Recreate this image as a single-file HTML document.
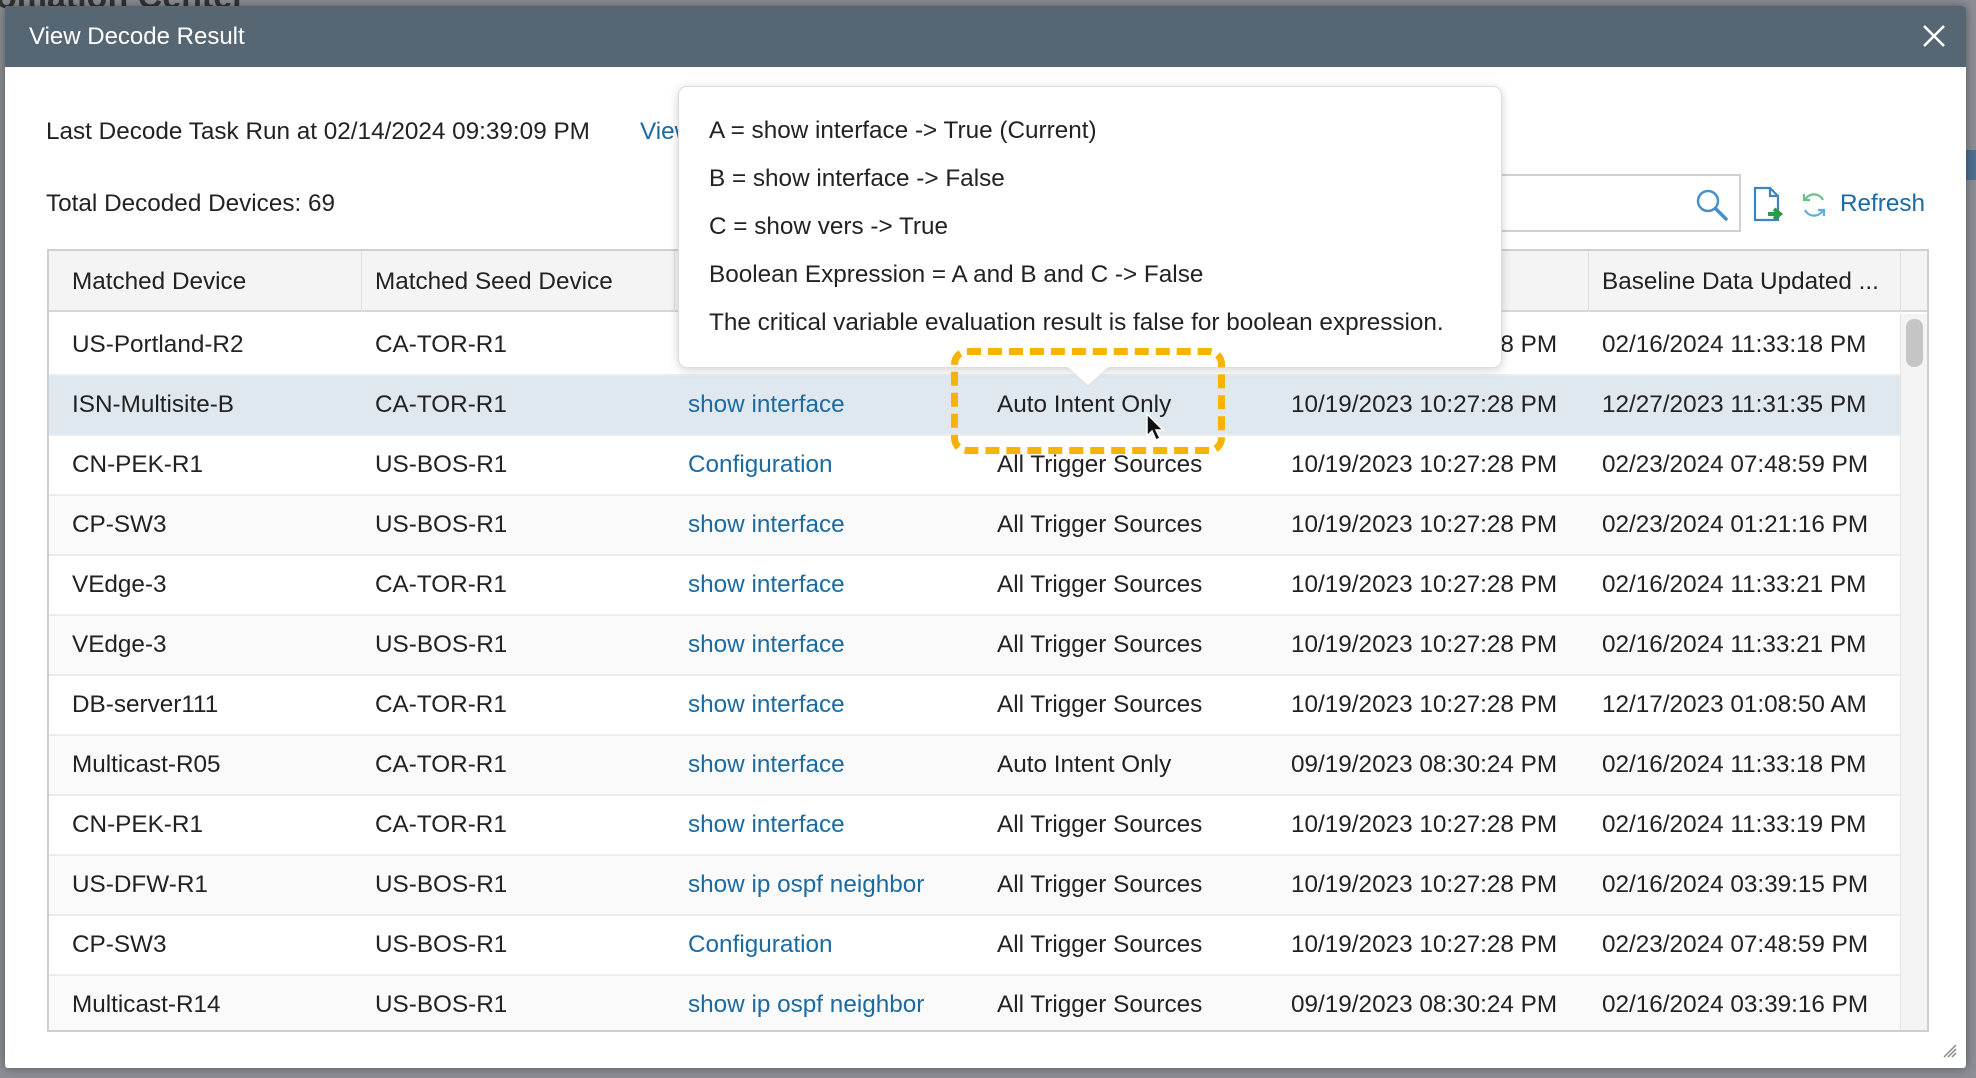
<!DOCTYPE html>
<html><head><meta charset="utf-8">
<style>
*{margin:0;padding:0;box-sizing:border-box}
html,body{width:1976px;height:1078px;overflow:hidden}
body{background:#8b8f95;font-family:"Liberation Sans",sans-serif;color:#222;position:relative}
.bgt{position:absolute;left:-4px;top:-22px;font-size:34px;font-weight:bold;color:#333}
.dlg{position:absolute;left:5px;top:6px;width:1961px;height:1062px;background:#fff;box-shadow:0 0 10px rgba(0,0,0,.4);border-radius:3px;overflow:hidden}
.tb{position:absolute;left:0;top:0;right:0;height:61px;background:#566773;color:#fff;font-size:24px;line-height:61px;padding-left:24px}
.x{position:absolute;right:20px;top:18px}
.abs{position:absolute;white-space:nowrap}
.t{font-size:24.3px}
.lk{color:#1b6aa1}
.tbl{position:absolute;left:42px;top:243px;width:1882px;height:783px;border:2px solid #cfcfcf;overflow:hidden;background:#fff}
.hd{position:absolute;left:0;top:0;width:1878px;height:61px;background:#f4f4f4;border-bottom:2px solid #d6d6d6}
.row{position:absolute;left:0;width:1851px;height:60px;border-bottom:2px solid #ececec;background:#fff}
.row.alt{background:#fafafa}
.row.sel{background:#dfe8ef}
.c{position:absolute;top:0;line-height:58px;font-size:24.3px;white-space:nowrap}
.vl{position:absolute;top:0;width:1px;height:61px;background:#dedede}
.pop{position:absolute;left:673px;top:80px;width:824px;height:282px;background:#fff;border:1px solid #ddd;border-radius:9px;box-shadow:0 2px 10px rgba(0,0,0,.18)}
.pop div{position:absolute;left:30px;font-size:24.3px;white-space:nowrap;color:#222}
</style></head><body>
<div class="bgt">omation Center</div>
<div style="position:absolute;left:1966px;top:150px;width:10px;height:30px;background:#4d6f92"></div>
<div class="dlg">
 <div class="tb">View Decode Result
  <svg class="x" width="24" height="24" viewBox="0 0 24 24"><path d="M2 2L22 22M22 2L2 22" stroke="#fff" stroke-width="2.6"/></svg>
 </div>
 <div class="abs t" style="left:41px;top:112px">Last Decode Task Run at 02/14/2024 09:39:09 PM</div>
 <div class="abs t lk" style="left:635px;top:112px">View</div>
 <div class="abs t" style="left:41px;top:184px">Total Decoded Devices: 69</div>
 <div class="abs" style="left:1380px;top:168px;width:356px;height:58px;border:2px solid #d0d0d0"></div>
 <svg class="abs" style="left:1690px;top:182px" width="34" height="34" viewBox="0 0 34 34"><circle cx="13" cy="13" r="10" fill="none" stroke="#4a90c8" stroke-width="2.5"/><path d="M20.5 20.5L31 31" stroke="#4a90c8" stroke-width="3.5" stroke-linecap="round"/></svg>
 <svg class="abs" style="left:1747px;top:180px" width="34" height="38" viewBox="0 0 34 38"><path d="M3 2H18L26 10V34H3Z M18 2V10H26" fill="none" stroke="#3a86c4" stroke-width="2.2"/><path d="M16 28H26M22 23L28 28L22 33" fill="none" stroke="#2a9c46" stroke-width="4"/></svg>
 <svg class="abs" style="left:1795px;top:185px" width="28" height="28" viewBox="0 0 28 28"><path d="M23 9A10 10 0 0 0 5 9M4 3V9H10" fill="none" stroke="#6cbf8a" stroke-width="2.2"/><path d="M5 19A10 10 0 0 0 23 19M24 25V19H18" fill="none" stroke="#5ab0d8" stroke-width="2.2"/></svg>
 <div class="abs lk" style="left:1835px;top:184px;font-size:24.3px">Refresh</div>

 <div class="tbl">
  <div class="hd">
   <div class="c" style="left:23px;line-height:61px">Matched Device</div>
   <div class="vl" style="left:312px"></div>
   <div class="c" style="left:326px;line-height:61px">Matched Seed Device</div>
   <div class="vl" style="left:625px"></div>
   <div class="vl" style="left:923px"></div>
   <div class="vl" style="left:1228px"></div>
   <div class="vl" style="left:1539px"></div>
   <div class="c" style="left:1553px;line-height:61px">Baseline Data Updated ...</div>
   <div class="vl" style="left:1851px"></div>
  </div>
  <div style="position:absolute;left:1851px;top:63px;width:30px;height:720px;background:#f4f4f4;border-left:1px solid #e3e3e3"></div>
  <div style="position:absolute;left:1857px;top:68px;width:17px;height:48px;background:#c5c5c5;border-radius:8px"></div>
  <div class="row" style="top:63px;height:62px"><div class="c" style="left:23px;line-height:62px">US-Portland-R2</div><div class="c" style="left:326px;line-height:62px">CA-TOR-R1</div><div class="c" style="left:1242px;line-height:62px">10/19/2023 10:27:28 PM</div><div class="c" style="left:1553px;line-height:62px">02/16/2024 11:33:18 PM</div></div>
  <div class="row sel" style="top:125px"><div class="c" style="left:23px">ISN-Multisite-B</div><div class="c" style="left:326px">CA-TOR-R1</div><div class="c lk" style="left:639px">show interface</div><div class="c" style="left:948px">Auto Intent Only</div><div class="c" style="left:1242px">10/19/2023 10:27:28 PM</div><div class="c" style="left:1553px">12/27/2023 11:31:35 PM</div></div>
  <div class="row" style="top:185px"><div class="c" style="left:23px">CN-PEK-R1</div><div class="c" style="left:326px">US-BOS-R1</div><div class="c lk" style="left:639px">Configuration</div><div class="c" style="left:948px">All Trigger Sources</div><div class="c" style="left:1242px">10/19/2023 10:27:28 PM</div><div class="c" style="left:1553px">02/23/2024 07:48:59 PM</div></div>
  <div class="row alt" style="top:245px"><div class="c" style="left:23px">CP-SW3</div><div class="c" style="left:326px">US-BOS-R1</div><div class="c lk" style="left:639px">show interface</div><div class="c" style="left:948px">All Trigger Sources</div><div class="c" style="left:1242px">10/19/2023 10:27:28 PM</div><div class="c" style="left:1553px">02/23/2024 01:21:16 PM</div></div>
  <div class="row" style="top:305px"><div class="c" style="left:23px">VEdge-3</div><div class="c" style="left:326px">CA-TOR-R1</div><div class="c lk" style="left:639px">show interface</div><div class="c" style="left:948px">All Trigger Sources</div><div class="c" style="left:1242px">10/19/2023 10:27:28 PM</div><div class="c" style="left:1553px">02/16/2024 11:33:21 PM</div></div>
  <div class="row alt" style="top:365px"><div class="c" style="left:23px">VEdge-3</div><div class="c" style="left:326px">US-BOS-R1</div><div class="c lk" style="left:639px">show interface</div><div class="c" style="left:948px">All Trigger Sources</div><div class="c" style="left:1242px">10/19/2023 10:27:28 PM</div><div class="c" style="left:1553px">02/16/2024 11:33:21 PM</div></div>
  <div class="row" style="top:425px"><div class="c" style="left:23px">DB-server111</div><div class="c" style="left:326px">CA-TOR-R1</div><div class="c lk" style="left:639px">show interface</div><div class="c" style="left:948px">All Trigger Sources</div><div class="c" style="left:1242px">10/19/2023 10:27:28 PM</div><div class="c" style="left:1553px">12/17/2023 01:08:50 AM</div></div>
  <div class="row alt" style="top:485px"><div class="c" style="left:23px">Multicast-R05</div><div class="c" style="left:326px">CA-TOR-R1</div><div class="c lk" style="left:639px">show interface</div><div class="c" style="left:948px">Auto Intent Only</div><div class="c" style="left:1242px">09/19/2023 08:30:24 PM</div><div class="c" style="left:1553px">02/16/2024 11:33:18 PM</div></div>
  <div class="row" style="top:545px"><div class="c" style="left:23px">CN-PEK-R1</div><div class="c" style="left:326px">CA-TOR-R1</div><div class="c lk" style="left:639px">show interface</div><div class="c" style="left:948px">All Trigger Sources</div><div class="c" style="left:1242px">10/19/2023 10:27:28 PM</div><div class="c" style="left:1553px">02/16/2024 11:33:19 PM</div></div>
  <div class="row alt" style="top:605px"><div class="c" style="left:23px">US-DFW-R1</div><div class="c" style="left:326px">US-BOS-R1</div><div class="c lk" style="left:639px">show ip ospf neighbor</div><div class="c" style="left:948px">All Trigger Sources</div><div class="c" style="left:1242px">10/19/2023 10:27:28 PM</div><div class="c" style="left:1553px">02/16/2024 03:39:15 PM</div></div>
  <div class="row" style="top:665px"><div class="c" style="left:23px">CP-SW3</div><div class="c" style="left:326px">US-BOS-R1</div><div class="c lk" style="left:639px">Configuration</div><div class="c" style="left:948px">All Trigger Sources</div><div class="c" style="left:1242px">10/19/2023 10:27:28 PM</div><div class="c" style="left:1553px">02/23/2024 07:48:59 PM</div></div>
  <div class="row alt" style="top:725px"><div class="c" style="left:23px">Multicast-R14</div><div class="c" style="left:326px">US-BOS-R1</div><div class="c lk" style="left:639px">show ip ospf neighbor</div><div class="c" style="left:948px">All Trigger Sources</div><div class="c" style="left:1242px">09/19/2023 08:30:24 PM</div><div class="c" style="left:1553px">02/16/2024 03:39:16 PM</div></div>
 </div>

 <div class="pop">
  <div style="top:30px">A = show interface -&gt; True (Current)</div>
  <div style="top:78px">B = show interface -&gt; False</div>
  <div style="top:126px">C = show vers -&gt; True</div>
  <div style="top:174px">Boolean Expression = A and B and C -&gt; False</div>
  <div style="top:222px">The critical variable evaluation result is false for boolean expression.</div>
 </div>
 <svg class="abs" style="left:1063px;top:360px" width="40" height="22" viewBox="0 0 40 22"><path d="M0 2L20 20L40 2" fill="#fff" stroke="#ddd" stroke-width="1"/><rect x="0" y="0" width="40" height="2" fill="#fff"/></svg>
 <div class="abs" style="left:946px;top:342px;width:274px;height:106px;border:7px dashed #f6b400;border-radius:16px"></div>
 <svg class="abs" style="left:1140px;top:406px" width="20" height="30" viewBox="0 0 20 30"><path d="M2 2V24L7 19L11 28L15 26L11 18H18Z" fill="#111" stroke="#fff" stroke-width="1.5"/></svg>
 <svg class="abs" style="left:1936px;top:1036px" width="16" height="16" viewBox="0 0 16 16"><path d="M15 3L3 15M15 7L7 15M15 11L11 15" stroke="#888" stroke-width="1.5"/></svg>
</div>
</body></html>
